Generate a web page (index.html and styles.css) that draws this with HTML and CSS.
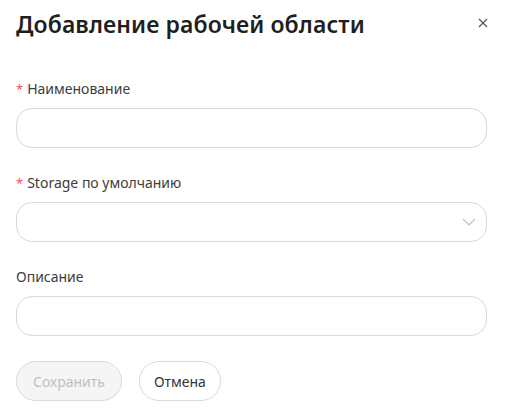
FILE: index.html
```html
<!DOCTYPE html>
<html lang="ru">
<head>
<meta charset="utf-8">
<link rel="stylesheet" href="styles.css">
</head>
<body>
<div class="modal">
  <div class="header">
    <h1 class="title">Добавление рабочей области</h1>
    <button class="close" aria-label="Закрыть">
      <svg width="10" height="10" viewBox="0 0 10 10"><path d="M1 1L9 9M9 1L1 9" stroke="#555" stroke-width="1.2" fill="none"/></svg>
    </button>
  </div>
  <form class="form">
    <div class="item">
      <label class="label"><span class="req">*</span>Наименование</label>
      <div class="input"></div>
    </div>
    <div class="item">
      <label class="label"><span class="req">*</span>Storage по умолчанию</label>
      <div class="input select">
        <svg class="chev" width="14" height="8" viewBox="0 0 14 8"><path d="M1 1L7 7L13 1" stroke="#bfbfbf" stroke-width="1.2" fill="none"/></svg>
      </div>
    </div>
    <div class="item last">
      <label class="label">Описание</label>
      <div class="input"></div>
    </div>
    <div class="actions">
      <button type="button" class="btn disabled">Сохранить</button>
      <button type="button" class="btn cancel">Отмена</button>
    </div>
  </form>
</div>
</body>
</html>
```
FILE: styles.css
```css
html, body {
  margin: 0;
  padding: 0;
  background: #fff;
}
body {
  font-family: "Noto Sans", Lato, sans-serif;
  color: #333;
}
.modal {
  padding: 8px 24px 16px 16px;
}
.header {
  display: flex;
  justify-content: space-between;
  align-items: flex-start;
}
.title {
  margin: 0;
  font-size: 23px;
  font-weight: 600;
  letter-spacing: 0.1px;
  line-height: 32px;
  color: #1f1f1f;
}
.close {
  border: none;
  background: none;
  padding: 0;
  margin: 8px -3px 0 0;
  width: 14px;
  height: 14px;
  display: flex;
  align-items: center;
  justify-content: center;
}
.form {
  margin-top: 38px;
}
.item {
  margin-bottom: 24px;
}
.item.last {
  margin-bottom: 25px;
}
.label {
  display: block;
  font-size: 14px;
  line-height: 22px;
  color: #3d3d3d;
  margin-bottom: 8px;
}
.req {
  color: #ff4d4f;
  margin-right: 4px;
  font-size: 13px;
}
.input {
  height: 40px;
  box-sizing: border-box;
  border: 1px solid #d9d9d9;
  border-radius: 16px;
  background: #fff;
}
.select {
  display: flex;
  align-items: center;
  justify-content: flex-end;
  padding-right: 10px;
}
.actions {
  display: flex;
  gap: 17px;
}
.btn {
  height: 40px;
  padding: 0 16px;
  border: 1px solid #d9d9d9;
  border-radius: 20px;
  background: #fff;
  font-family: inherit;
  font-size: 14px;
  color: #333;
}
.btn.cancel {
  padding: 0 14px;
}
.btn.disabled {
  background: #f5f5f5;
  color: #bfbfbf;
}
```
